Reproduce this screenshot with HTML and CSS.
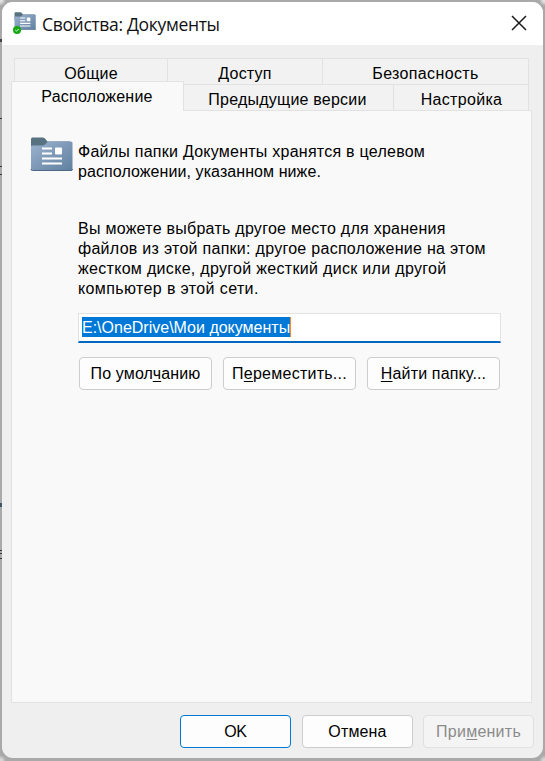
FILE: index.html
```html
<!DOCTYPE html>
<html lang="ru">
<head>
<meta charset="utf-8">
<title>Свойства: Документы</title>
<link rel="stylesheet" href="styles.css">
</head>
<body>
<svg width="0" height="0" class="defs">
  <defs>
    <linearGradient id="front" x1="0" y1="0" x2="1" y2="1">
      <stop offset="0" stop-color="#9bb3cf"/><stop offset="1" stop-color="#607f9f"/>
    </linearGradient>
    <symbol id="folder" viewBox="0 0 43 34">
      <path d="M1 2Q1 .5 2.500 .5H12.500Q14 .5 15 1.500L17.500 4.500H40V16H1Z" fill="#577381"/>
      <path d="M1 9.500Q1 8.500 2 8.500H12.500Q14 8.500 15 7.500L17 5.500Q18 4.500 19.500 4.500H41Q42.500 4.500 42.500 6V32Q42.500 33.500 41 33.500H2.500Q1 33.500 1 32Z" fill="url(#front)"/>
      <path d="M1 32Q1 33.500 2.500 33.500H41Q42.500 33.500 42.500 32" fill="none" stroke="#4d6885"/>
      <path d="M12 10.500h10v2H12zM12 15.500h10v2H12zM12 20.500h20v2H12zM12 25.500h20v2H12z" fill="#fff"/>
      <rect x="25" y="10.500" width="7" height="7" rx="1" fill="#fff"/>
    </symbol>
  </defs>
</svg>
<div class="window">
  <header class="titlebar">
    <div class="app-icon">
      <svg class="app-folder" viewBox="0 0 43 34" preserveAspectRatio="none"><use href="#folder" width="43" height="34"/></svg>
      <svg class="badge" viewBox="0 0 8 8"><circle cx="4" cy="4" r="4" fill="#16a813"/><path d="M2.300 4.100L3.500 5.200L5.700 3" fill="none" stroke="#fff" stroke-width=".9"/></svg>
    </div>
    <h1 class="title">Свойства: Документы</h1>
    <svg class="close" viewBox="0 0 16 16"><path d="M1 1L15 15M15 1L1 15" stroke="#1b1b1b" stroke-width="1.500" fill="none"/></svg>
  </header>
  <nav class="tabs">
    <div class="row">
      <div class="tab general"><span>Общие</span></div>
      <div class="tab share"><span>Доступ</span></div>
      <div class="tab security"><span>Безопасность</span></div>
    </div>
    <div class="row">
      <div class="tab active"><span>Расположение</span></div>
      <div class="tab versions"><span>Предыдущие версии</span></div>
      <div class="tab custom"><span>Настройка</span></div>
    </div>
  </nav>
  <main class="page">
    <div class="intro">
      <svg class="folder"><use href="#folder"/></svg>
      <p><span class="a1">Файлы папки Документы хранятся в целевом</span><br><span class="a2">расположении, указанном ниже.</span></p>
    </div>
    <div class="body">
      <p><span class="b1">Вы можете выбрать другое место для хранения</span><br><span class="b2">файлов из этой папки: другое расположение на этом</span><br><span class="b3">жестком диске, другой жесткий диск или другой</span><br><span class="b4">компьютер в этой сети.</span></p>
      <div class="field"><span class="selected">E:\OneDrive\Мои документы</span></div>
      <div class="actions">
        <button class="btn"><span>По умол<u>ч</u>анию</span></button>
        <button class="btn move"><span>П<u>е</u>реместить...</span></button>
        <button class="btn"><span><u>Н</u>айти папку...</span></button>
      </div>
    </div>
  </main>
  <footer class="footer">
    <button class="btn primary">OK</button>
    <button class="btn">Отмена</button>
    <button class="btn disabled"><span>При<u>м</u>енить</span></button>
  </footer>
</div>
</body>
</html>
```
FILE: styles.css
```css
* { box-sizing: border-box; }
body {
  margin: 0;
  height: 761px;
  padding: 2px 2px 3px;
  overflow: hidden;
  /* slivers of the window behind the dialog, then its shadow */
  background:
    linear-gradient(#444, #444) 0 39px / 2px 3px no-repeat,
    linear-gradient(#333, #333) 0 118px / 2px 1px no-repeat,
    linear-gradient(#333, #333) 0 166px / 2px 1px no-repeat,
    linear-gradient(#333, #333) 0 174px / 2px 1px no-repeat,
    linear-gradient(#3f5566, #3f5566) 0 503px / 2px 4px no-repeat,
    linear-gradient(#333, #333) 0 550px / 2px 1px no-repeat,
    linear-gradient(#333, #333) 0 553px / 2px 1px no-repeat,
    linear-gradient(#333, #333) 0 558px / 2px 1px no-repeat,
    radial-gradient(circle at 0 0, #e2e2e2 2px, transparent 6px),
    radial-gradient(circle at 100% 0, #e2e2e2 2px, transparent 6px),
    radial-gradient(circle at 0 100%, #d8d8d8 2px, transparent 6px),
    radial-gradient(circle at 100% 100%, #d8d8d8 2px, transparent 6px),
    #a9a9a9;
  font: 16px/20px "Liberation Sans", Arial, sans-serif;
  color: #000;
}
.defs { position: absolute; }
.window {
  height: 756px;
  display: flex;
  flex-direction: column;
  background: #efefef;
  border-radius: 11px;
  overflow: hidden;
}
.titlebar {
  height: 43px;
  flex: none;
  display: flex;
  align-items: center;
  padding: 0 16.5px 0 11px;
  background: #fff;
}
.app-icon { position: relative; width: 23px; height: 22px; flex: none; margin-top: -2px; }
.app-folder { display: block; width: 22px; height: 18px; margin-left: 1px; }
.badge { position: absolute; left: 0; bottom: 0; width: 8px; height: 8px; }
.title {
  flex: 1;
  margin: 0 0 0 6px;
  font: 400 17.5px/24px "Open Sans", "Noto Sans", sans-serif;
  letter-spacing: -.33px;
  color: #111;
}
.close { width: 16px; height: 16px; margin-top: -2px; }
.tabs { padding: 13px 14px 0 12px; flex: none; }
.row { display: flex; height: 26px; }
.tab {
  flex: none;
  height: 26px;
  border: 1px solid #e2e2e2;
  border-left: 0;
  border-bottom: 0;
  background: #f2f2f2;
  text-align: center;
  line-height: 29px;
  white-space: nowrap;
  letter-spacing: .22px;
}
.general { width: 154px; border-left: 1px solid #e2e2e2; }
.share { width: 155px; }
.security { width: 206px; letter-spacing: .35px; }
.active {
  position: relative;
  width: 173px;
  height: 30px;
  margin: -3px 0 0 -3px;
  background: #f9f9f9;
  border-left: 1px solid #e2e2e2;
  line-height: 30px;
  z-index: 1;
}
.active span { margin-right: 1px; }
.versions { width: 210px; }
.versions span { margin-right: 2px; }
.custom { width: 135px; padding-left: 1px; letter-spacing: .3px; }
.page {
  margin: 0 11px 0 9px;
  height: 593px;
  padding: 26px 30px 0 18px;
  background: #f9f9f9;
  border: 1px solid #e2e2e2;
}
.page p { margin: 0; white-space: nowrap; }
.a1 { letter-spacing: .25px; }
.a2 { letter-spacing: .08px; }
.b1 { letter-spacing: .26px; }
.b2 { letter-spacing: .28px; }
.b3 { letter-spacing: .31px; }
.b4 { letter-spacing: .38px; }
.intro { display: flex; gap: 5px; }
.intro p { padding-top: 5px; }
.folder { width: 43px; height: 34px; flex: none; }
.body { margin: 37px 0 0 48px; }
.field {
  height: 30px;
  margin-top: 14px;
  padding: 3px 0 0 3px;
  background: #fff;
  border: 1px solid #e2e2e2;
  border-bottom: 2px solid #0067c0;
}
.selected {
  display: inline-block;
  height: 20px;
  line-height: 21px;
  background: #0078d7;
  color: #fff;
  border-right: 1px solid #ff8728;
}
.actions { display: flex; gap: 11px; margin: 14px 0 0 1px; }
.btn {
  flex: none;
  width: 133px;
  height: 33px;
  padding: 0;
  border: 1px solid #cdcdcd;
  border-radius: 4px;
  background: #fdfdfd;
  font: inherit;
  letter-spacing: .15px;
  color: #000;
  white-space: nowrap;
}
.btn.move { letter-spacing: .25px; }
.btn u { text-underline-offset: 2px; text-decoration-thickness: 1px; text-decoration-skip-ink: none; }
.footer { display: flex; gap: 11px; padding: 12px 0 0 178px; }
.footer .btn { width: 111px; }
.footer .primary { border-color: #0078d4; letter-spacing: -.4px; }
.footer .disabled { margin-left: -1px; background: #f4f4f4; border-color: #e0e0e0; color: #8b8b8b; letter-spacing: .25px; }
```
